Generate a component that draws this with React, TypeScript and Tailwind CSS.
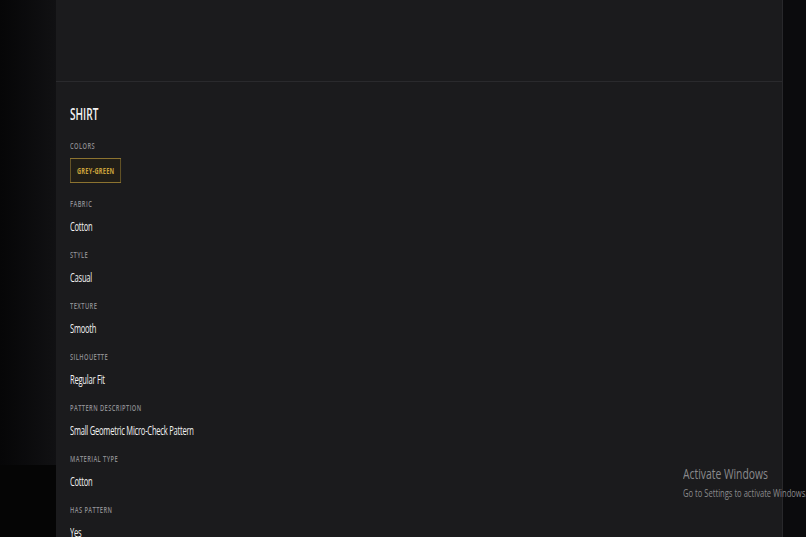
import React from "react";

const rows: { label: string; value: string }[] = [
  { label: "Fabric", value: "Cotton" },
  { label: "Style", value: "Casual" },
  { label: "Texture", value: "Smooth" },
  { label: "Silhouette", value: "Regular Fit" },
  { label: "Pattern Description", value: "Small Geometric Micro-Check Pattern" },
  { label: "Material Type", value: "Cotton" },
  { label: "Has Pattern", value: "Yes" },
];

export default function App() {
  return (
    <div
      className="relative flex w-[806px] h-[537px] overflow-hidden bg-[#0c0c0e]"
      style={{ fontFamily: '"Open Sans", "Noto Sans", sans-serif' }}
    >
      <div className="flex flex-col w-[56px] shrink-0">
        <div className="h-[465px] bg-gradient-to-r from-[#060607] to-[#111113]" />
        <div className="flex-1 bg-[#050505]" />
      </div>

      <div className="flex flex-col w-[727px] shrink-0 bg-[#1b1b1d] border-r border-[#28282b]">
        <div className="h-[82px] shrink-0 border-b border-[#2a2a2d]" />
        <div className="pl-[14px] pt-[21px]">
          <div className="origin-top-left scale-x-[0.63] w-[1000px]">
            <div className="text-[16px] leading-[22px] font-semibold text-[#f3f3f3]">SHIRT</div>
            <div className="mt-[16px] text-[9px] leading-[10px] uppercase tracking-[0.08em] font-semibold text-[#8b8b90]">
              Colors
            </div>
            <div className="mt-[7px] flex">
              <div className="h-[25px] flex items-center px-[10px] border border-[#8c7330] bg-[#211e17] text-[9px] font-bold tracking-[0.04em] text-[#caa33b]">
                GREY-GREEN
              </div>
            </div>
            <div className="mt-[16px] flex flex-col">
              {rows.map((r, i) => (
                <div key={i} className={i === 0 ? "" : "mt-[15px]"}>
                  <div className="text-[9px] leading-[10px] uppercase tracking-[0.08em] font-semibold text-[#8b8b90]">
                    {r.label}
                  </div>
                  <div className="mt-[10px] text-[12px] leading-[16px] tracking-[-0.03em] text-[#f2f2f2]">
                    {r.value}
                  </div>
                </div>
              ))}
            </div>
          </div>
        </div>
      </div>

      <div className="flex-1 bg-[#0b0b0d]" />

      <div className="absolute left-[683px] top-[463px] w-[300px] text-[#8a8a8c]">
        <div className="origin-top-left scale-x-[0.69] text-[15px] leading-[20px] whitespace-nowrap">
          Activate Windows
        </div>
        <div className="origin-top-left scale-x-[0.66] text-[11.5px] leading-[16px] mt-[2px] whitespace-nowrap">
          Go to Settings to activate Windows.
        </div>
      </div>
    </div>
  );
}
